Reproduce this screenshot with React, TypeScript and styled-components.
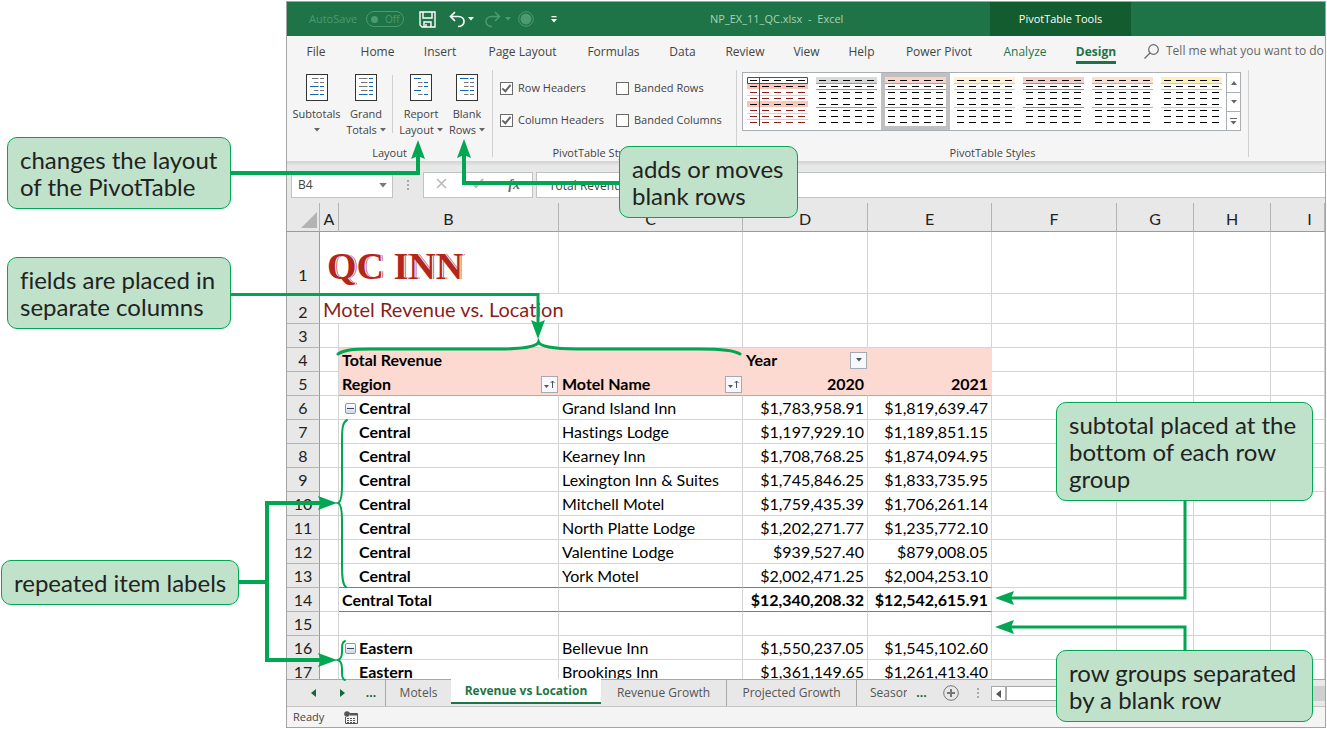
import React from "react";
import styled, { createGlobalStyle } from "styled-components";

const ui = '"Open Sans", "Noto Sans", sans-serif';
const cellFont = 'Lato, "Open Sans", sans-serif';
const green = "#1e7446";
const callGreen = "#00a651";

const Global = createGlobalStyle`
  *, *::before, *::after { box-sizing: border-box; }
  body { margin: 0; background: #fff; font-family: ${ui}; font-variant-ligatures: none; overflow: hidden; }
  button, input { font: inherit; color: inherit; border: 0; padding: 0; margin: 0; background: none; border-radius: 0; }
`;

const Page = styled.div`
  position: relative;
  height: 100vh;
  padding: 1px 1px 1px 286px;
`;

const Workbook = styled.main`
  display: flex;
  flex-direction: column;
  height: 100%;
  border: 1px solid #a2a5a8;
  background: #e8e8e8;
  font-size: 11px;
  line-height: 16px;
  color: #444;
  overflow: hidden;
`;

/* ---------- title bar ---------- */
const TitleBar = styled.header`
  display: flex;
  flex: none;
  height: 34px;
  background: ${green};
  color: #a5d3b9;
`;
const QuickAccess = styled.div`
  display: flex;
  align-items: center;
  width: 423px;
  padding-left: 22px;
  flex: none;
  color: #4c9a70;
`;
const SwitchLabel = styled.label`
  display: flex;
  align-items: center;
  justify-content: space-between;
  width: 95px;
`;
const Toggle = styled.button`
  display: flex;
  align-items: center;
  gap: 7px;
  width: 38px;
  height: 16px;
  padding-left: 4px;
  border: 1px solid #4c9a70;
  border-radius: 8px;
  font-size: 10px;
  line-height: 14px;
  &::before {
    content: "";
    width: 7px;
    height: 7px;
    border-radius: 50%;
    background: #4c9a70;
  }
`;
const IconButton = styled.button<{ $ml: number; $faded?: boolean }>`
  display: flex;
  margin-left: ${(p) => p.$ml}px;
  color: ${(p) => (p.$faded ? "#4c9a70" : "#fff")};
`;
const FileName = styled.div`
  width: 280px;
  flex: none;
  line-height: 34px;
  white-space: pre;
`;
const ToolsTitle = styled.div`
  width: 141px;
  flex: none;
  background: #125c30;
  color: #fff;
  line-height: 34px;
  text-align: center;
  font-weight: 500;
`;

/* ---------- ribbon ---------- */
const TabRow = styled.nav`
  display: flex;
  flex: none;
  height: 30px;
  padding-left: 4px;
  background: #f5f5f5;
  white-space: nowrap;
  overflow: hidden;
`;
const Tab = styled.button<{ $w: number; $tone?: "green" | "active" }>`
  width: ${(p) => p.$w}px;
  flex: none;
  font-size: 12px;
  color: ${(p) => (p.$tone ? green : "#444")};
  font-weight: ${(p) => (p.$tone === "active" ? 700 : 400)};
  span {
    display: inline-block;
    padding: 6px 0 1px;
    border-bottom: 3px solid ${(p) => (p.$tone === "active" ? green : "transparent")};
  }
`;
const TellMe = styled.button`
  display: flex;
  align-items: center;
  gap: 7px;
  margin-left: 7px;
  font-size: 12px;
  color: #666;
`;
const Ribbon = styled.section`
  display: flex;
  flex: none;
  height: 95px;
  padding-top: 4px;
  background: #f5f5f5;
`;
const RibbonShadow = styled.div`
  flex: none;
  height: 5px;
  background: linear-gradient(#d2d2d2, #e8e8e8);
`;
const Group = styled.div<{ $w: number }>`
  display: flex;
  flex-direction: column;
  justify-content: space-between;
  flex: none;
  width: ${(p) => p.$w}px;
  height: 87px;
  border-right: 1px solid #cfcfcf;
`;
const GroupLabel = styled.div`
  text-align: center;
  line-height: 8px;
`;
const BigButtons = styled.div`
  display: flex;
`;
const BigButton = styled.button<{ $w: number }>`
  display: flex;
  flex-direction: column;
  align-items: center;
  width: ${(p) => p.$w}px;
  padding-top: 4px;
  svg.page { margin-bottom: 5px; }
`;
const CaretLine = styled.span`
  display: flex;
  align-items: center;
  gap: 3px;
  height: 16px;
  svg { color: #666; }
`;
const Divider = styled.i`
  width: 1px;
  height: 58px;
  margin: 5px 0 0 6px;
  background: #cfcfcf;
`;
const Options = styled.div`
  display: grid;
  grid-template-columns: 116px 1fr;
  row-gap: 16px;
  padding: 10px 0 0 7px;
`;
const CheckLabel = styled.label`
  display: flex;
  align-items: center;
  gap: 5px;
  white-space: nowrap;
`;
const CheckBox = styled.input`
  appearance: none;
  width: 13px;
  height: 13px;
  border: 1px solid #6a6a6a;
  background: #fff;
  &:checked::after {
    content: "";
    display: block;
    width: 5px;
    height: 9px;
    margin: 0 0 0 3px;
    border: solid #666;
    border-width: 0 2px 2px 0;
    transform: rotate(40deg);
  }
`;
const Gallery = styled.div`
  display: flex;
  width: 499px;
  height: 59px;
  margin: 2px 0 0 5px;
  border: 1px solid #a9aeb2;
  background: #fff;
`;
const StyleItem = styled.button<{ $selected?: boolean }>`
  width: 69px;
  height: 57px;
  border: 4px solid ${(p) => (p.$selected ? "#c0c0c0" : "transparent")};
  display: flex;
`;
const Spinner = styled.div`
  display: grid;
  grid-template-rows: 1fr 1fr 1fr;
  width: 15px;
  margin-left: auto;
  border-left: 1px solid #a9aeb2;
  color: #666;
  button { display: flex; align-items: center; justify-content: center; }
  button + button { border-top: 1px solid #a9aeb2; }
`;

/* ---------- formula bar ---------- */
const FormulaRow = styled.div`
  display: flex;
  flex: none;
  height: 37px;
  padding: 6px 0 5px 4px;
  font-size: 12px;
`;
const NameBox = styled.div`
  display: flex;
  align-items: center;
  width: 102px;
  height: 26px;
  padding: 0 5px 0 6px;
  border: 1px solid #bfc3c6;
  background: #fff;
  input { flex: 1; min-width: 0; }
  button { display: flex; color: #777; }
`;
const Grip = styled.span<{ $w: number }>`
  width: ${(p) => p.$w}px;
  display: flex;
  justify-content: center;
  align-items: center;
  height: 26px;
`;
const FormulaButtons = styled.div`
  display: flex;
  align-items: center;
  justify-content: space-around;
  width: 110px;
  height: 26px;
  margin-right: 3px;
  border: 1px solid #bfc3c6;
  background: #fff;
  color: #b9b9b9;
`;
const Fx = styled.button`
  font: italic 700 14px "Liberation Serif", serif;
  color: #666;
`;
const FormulaInput = styled.input`
  flex: 1;
  height: 26px;
  border: 1px solid #bfc3c6;
  border-right: 0;
  background: #fff;
  padding-left: 12px;
`;

/* ---------- sheet ---------- */
const SheetArea = styled.div`
  flex: 1;
  min-height: 0;
  overflow: hidden;
`;
const Sheet = styled.table`
  width: 100%;
  table-layout: fixed;
  border-collapse: separate;
  border-spacing: 0;
  background: #fff;
  color: #000;
  font-family: ${cellFont};
  font-size: 16px;
  line-height: 20px;
`;
const ColHead = styled.th`
  height: 29px;
  padding: 4px 0 0;
  background: #e8e8e8;
  border-bottom: 1px solid #9b9b9b;
  border-right: 1px solid #b4b4b4;
  font-weight: 400;
  color: #222;
`;
const Corner = styled(ColHead)`
  padding: 0;
  svg { display: block; margin: 6px 0 0 14px; }
`;
/* The last column runs on past the edge of the window, so its letter is centred on its full width. */
const WideLetter = styled.div`
  width: 77px;
  text-align: center;
`;
const Row = styled.tr<{ $h?: number }>`
  height: ${(p) => p.$h ?? 24}px;
`;
const RowHead = styled.th<{ $low?: boolean }>`
  padding: 0 0 ${(p) => (p.$low ? 8 : 1)}px;
  background: #e8e8e8;
  border-right: 1px solid #9b9b9b;
  border-bottom: 1px solid #b4b4b4;
  font-weight: 400;
  color: #222;
  vertical-align: bottom;
`;
const Cell = styled.td<{ $right?: boolean; $bold?: boolean; $pink?: boolean; $line?: string }>`
  padding: 0 3px 1px;
  white-space: nowrap;
  vertical-align: bottom;
  text-align: ${(p) => (p.$right ? "right" : "left")};
  font-weight: ${(p) => (p.$bold ? 700 : 400)};
  background: ${(p) => (p.$pink ? "#fcd9d1" : "#fff")};
  border-right: 1px solid ${(p) => (p.$pink ? "#fcd9d1" : "#d4d4d4")};
  border-bottom: 1px solid ${(p) => p.$line ?? "#d4d4d4"};
`;
const CellFlex = styled.div<{ $indent?: boolean }>`
  display: flex;
  align-items: center;
  justify-content: space-between;
  padding-left: ${(p) => (p.$indent ? 17 : 0)}px;
  margin-right: -3px;
`;
const GroupLine = styled.div`
  display: flex;
  align-items: center;
  gap: 3px;
  padding-left: 3px;
`;
const Collapse = styled.button`
  display: flex;
  align-items: center;
  justify-content: center;
  width: 11px;
  height: 11px;
  border: 1px solid #8a97b0;
  border-radius: 2px;
  background: linear-gradient(#fff, #cfd8e6);
  &::before { content: ""; width: 7px; height: 1px; background: #33476b; }
`;
const FilterButton = styled.button`
  display: flex;
  align-items: center;
  justify-content: center;
  width: 17px;
  height: 17px;
  border: 1px solid #a3aab5;
  background: #f6f8fb;
  color: #555;
`;
const Brand = styled.div`
  padding: 0 0 3px 4px;
  font: 700 38px/46px "Liberation Serif", serif;
  color: #b3261e;
  text-shadow: 1px 0 0 #fff, 2px 0 0 #c9654f;
`;
const Subtitle = styled.div`
  font-size: 20px;
  line-height: 26px;
  color: #8b1f1c;
`;

/* ---------- bottom ---------- */
const SheetTabs = styled.div`
  display: flex;
  flex: none;
  height: 28px;
  padding-left: 12px;
  border-top: 1px solid #a8a8a8;
  border-bottom: 1px solid #c4c4c4;
  background: #e8e8e8;
  font-size: 12px;
`;
const NavButton = styled.button<{ $sep?: boolean }>`
  width: 29px;
  height: 26px;
  color: #0f6b38;
  display: flex;
  align-items: center;
  justify-content: center;
  font-weight: 700;
  border-right: ${(p) => (p.$sep ? "1px solid #a8a8a8" : "0")};
`;
const SheetTab = styled.button<{ $w: number; $sep?: boolean; $active?: boolean }>`
  width: ${(p) => p.$w}px;
  height: ${(p) => (p.$active ? 25 : 26)}px;
  margin-top: ${(p) => (p.$active ? -1 : 0)}px;
  flex: none;
  overflow: hidden;
  white-space: nowrap;
  color: ${(p) => (p.$active ? green : "#555")};
  font-weight: ${(p) => (p.$active ? 700 : 400)};
  background: ${(p) => (p.$active ? "#fff" : "transparent")};
  border-bottom: ${(p) => (p.$active ? `2px solid ${green}` : "0")};
  border-right: ${(p) => (p.$sep ? "1px solid #a8a8a8" : "0")};
`;
const Clip = styled.button`
  width: 50px;
  padding-left: 13px;
  overflow: hidden;
  white-space: nowrap;
  text-align: left;
  color: #555;
`;
const ScrollBar = styled.div`
  display: flex;
  flex: 1;
  height: 15px;
  margin: 6px 0 0;
  background: #cfcfcf;
`;
const ScrollEnd = styled.button`
  display: flex;
  align-items: center;
  justify-content: center;
  width: 15px;
  border: 1px solid #a8a8a8;
  background: #fff;
  color: #555;
`;
const Thumb = styled.div`
  width: 240px;
  border: 1px solid #a8a8a8;
  background: #fff;
`;
const StatusBar = styled.footer`
  display: flex;
  align-items: center;
  gap: 20px;
  flex: none;
  height: 20px;
  padding-left: 6px;
  background: #f4f4f4;
`;

/* ---------- annotations ---------- */
const Lines = styled.svg`
  position: absolute;
  left: 0;
  top: 0;
  pointer-events: none;
`;
const Callout = styled.aside<{ $x: number; $y: number; $w: number }>`
  position: absolute;
  left: ${(p) => p.$x}px;
  top: ${(p) => p.$y}px;
  width: ${(p) => p.$w}px;
  padding: 8px 0 8px 12px;
  border: 1px solid ${callGreen};
  border-radius: 10px;
  background: #c0e2ca;
  color: #222;
  font-family: Lato, sans-serif;
  font-size: 24px;
  line-height: 27px;
  white-space: nowrap;
`;

const Caret = ({ w = 6 }: { w?: number }) => (
  <svg width={w} height={w === 6 ? 4 : 5} viewBox="0 0 6 4"><path d="M0 0H6L3 3.5Z" fill="currentColor" /></svg>
);

const Doc = ({ rows }: { rows: string }) => (
  <svg className="page" width="22" height="27" viewBox="0 0 22 27">
    <rect x="0.5" y="0.5" width="21" height="26" fill="#fff" stroke="#333" />
    {rows.split(",").map((row, i) => {
      const [kind, a, b] = row.split("");
      const c = (v: string) => (v === "b" ? "#1565b0" : "#777");
      const x = kind === "l" ? 4 : kind === "m" ? 6 : 8;
      const y = 4.5 + i * 4;
      return (
        <g key={y}>
          {a !== "-" && <path d={`M${x} ${y}H${b === "-" ? 11 : 12.500}`} stroke={c(a)} />}
          {b !== "-" && <path d={`M14 ${y}H18`} stroke={c(b)} />}
        </g>
      );
    })}
  </svg>
);

const Swatch = ({ fill, line, first }: { fill: string; line: string; first?: boolean }) => (
  <svg width="61" height="49" viewBox="0 0 61 49">
    <rect width="61" height={6} fill={first ? "#fff" : fill} />
    {first && <path d="M0 6H61V12H0ZM0 24H61V30H0Z" fill="#fbc6b8" />}
    {first ? (
      <path d="M0 18.5H61M0 36.5H61M0 42.5H61" stroke="#fbc6b8" />
    ) : (
      <path d="M0 6.5H61M0 12.5H61M0 30.5H61" stroke={line} />
    )}
    {Array.from({ length: 8 }, (_, r) => (
      <path
        key={r}
        d={`M3 ${3.5 + r * 6}h7m5 0h7m5 0h7m5 0h7m5 0h7`}
        stroke={first && ![0, 1, 4].includes(r) ? "#8b1f1c" : "#000"}
      />
    ))}
    {first && <path d="M0.5 0.5H60.5V6.5H0.5ZM12.5 0V49" fill="none" stroke="#b3261e" />}
  </svg>
);

const SortIcon = () => (
  <svg width="11" height="9" viewBox="0 0 11 9">
    <path d="M0 5H5L2.500 8Z" fill="currentColor" />
    <path d="M8.500 8V1M6.500 3L8.500 1L10.500 3" stroke="currentColor" fill="none" />
  </svg>
);

const GripDots = () => (
  <svg width="2" height="10" viewBox="0 0 2 10"><path d="M0 0H2V2H0ZM0 4H2V6H0ZM0 8H2V10H0Z" fill="#aaa" /></svg>
);

const styles = [
  ["#fff", "#b3261e"], ["#d9d9d9", "#999"], ["#fcd3c9", "#f08468"], ["#fff0cf", "#ffcb5c"],
  ["#f8cfc6", "#e8755b"], ["#fde0cc", "#f7a56a"], ["#fff0b8", "#f8cf30"],
];

const tabs: [string, number][] = [
  ["File", 50], ["Home", 73], ["Insert", 52], ["Page Layout", 113], ["Formulas", 69], ["Data", 69],
  ["Review", 56], ["View", 67], ["Help", 43], ["Power Pivot", 112], ["Analyze", 60],
];

const data: [string, string, string, string][] = [
  ["Central", "Grand Island Inn", "$1,783,958.91", "$1,819,639.47"],
  ["Central", "Hastings Lodge", "$1,197,929.10", "$1,189,851.15"],
  ["Central", "Kearney Inn", "$1,708,768.25", "$1,874,094.95"],
  ["Central", "Lexington Inn & Suites", "$1,745,846.25", "$1,833,735.95"],
  ["Central", "Mitchell Motel", "$1,759,435.39", "$1,706,261.14"],
  ["Central", "North Platte Lodge", "$1,202,271.77", "$1,235,772.10"],
  ["Central", "Valentine Lodge", "$939,527.40", "$879,008.05"],
  ["Central", "York Motel", "$2,002,471.25", "$2,004,253.10"],
];
const eastern: [string, string, string, string][] = [
  ["Eastern", "Bellevue Inn", "$1,550,237.05", "$1,545,102.60"],
  ["Eastern", "Brookings Inn", "$1,361,149.65", "$1,261,413.40"],
];

const Blank = ({ n }: { n: number }) => <>{Array.from({ length: n }, (_, i) => <Cell key={i} />)}</>;

const orange = "#f0502a";
const pink = "#fcd9d1";
const salmon = "#f0937c";

const DataRow = ({ n, row, first, last }: { n: number; row: string[]; first?: boolean; last?: boolean }) => {
  const line = last ? orange : undefined;
  return (
    <Row>
      <RowHead scope="row">{n}</RowHead>
      <Cell />
      <Cell $bold $line={line}>
        {first ? (
          <GroupLine><Collapse aria-label={`Collapse ${row[0]}`} /><span>{row[0]}</span></GroupLine>
        ) : (
          <CellFlex $indent>{row[0]}</CellFlex>
        )}
      </Cell>
      <Cell $line={line}>{row[1]}</Cell>
      <Cell $right $line={line}>{row[2]}</Cell>
      <Cell $right $line={line}>{row[3]}</Cell>
      <Blank n={4} />
    </Row>
  );
};

export default function App() {
  return (
    <Page>
      <Global />
      <Workbook>
        <TitleBar>
          <QuickAccess>
            <SwitchLabel>AutoSave <Toggle>Off</Toggle></SwitchLabel>
            <IconButton $ml={15} aria-label="Save">
              <svg width="17" height="17" viewBox="0 0 17 17" fill="none" stroke="currentColor" strokeWidth="1.400">
                <path d="M1 1H16V16H3L1 14ZM4 1V7H13V1M5 16V11H12V16M7 13V16" />
              </svg>
            </IconButton>
            <IconButton $ml={13} aria-label="Undo">
              <svg width="17" height="17" viewBox="0 0 17 17" fill="none" stroke="currentColor" strokeWidth="1.700">
                <path d="M6 1L1.500 5.500L6 10M2 5.500H9.500C13 5.500 15 8 15 10.500C15 13.500 12.500 15.500 9 15.500" />
              </svg>
            </IconButton>
            <IconButton $ml={2} aria-label="Undo list"><Caret /></IconButton>
            <IconButton $ml={10} $faded aria-label="Redo">
              <svg width="17" height="17" viewBox="0 0 17 17" fill="none" stroke="currentColor" strokeWidth="1.500">
                <path d="M11 1L15.500 5.500L11 10M15 5.500H7.500C4 5.500 2 8 2 10.500C2 13.500 4.500 15.500 8 15.500" />
              </svg>
            </IconButton>
            <IconButton $ml={4} $faded aria-label="Redo list"><Caret /></IconButton>
            <IconButton $ml={7} $faded aria-label="Record">
              <svg width="16" height="16" viewBox="0 0 16 16">
                <circle cx="8" cy="8" r="7.300" fill="none" stroke="currentColor" />
                <circle cx="8" cy="8" r="5.500" fill="currentColor" />
              </svg>
            </IconButton>
            <IconButton $ml={17} aria-label="Customize toolbar">
              <svg width="6" height="7" viewBox="0 0 6 7"><path d="M0.500 0H5.500V1.200H0.500ZM0 3H6L3 6.500Z" fill="currentColor" /></svg>
            </IconButton>
          </QuickAccess>
          <FileName>{"NP_EX_11_QC.xlsx  -  Excel"}</FileName>
          <ToolsTitle>PivotTable Tools</ToolsTitle>
        </TitleBar>

        <TabRow>
          {tabs.map(([t, w]) => (
            <Tab key={t} $w={w} $tone={t === "Analyze" ? "green" : undefined}><span>{t}</span></Tab>
          ))}
          <Tab $w={82} $tone="active"><span>Design</span></Tab>
          <TellMe>
            <svg width="15" height="15" viewBox="0 0 15 15" fill="none" stroke="currentColor" strokeWidth="1.200">
              <circle cx="9.500" cy="5.500" r="4.800" /><path d="M6 9L0.500 14.500" />
            </svg>
            Tell me what you want to do
          </TellMe>
        </TabRow>

        <Ribbon>
          <Group $w={206}>
            <BigButtons>
              <BigButton $w={59}>
                <Doc rows="mgg,rgg,lbb,rgg,lbb" />Subtotals<CaretLine><Caret /></CaretLine>
              </BigButton>
              <BigButton $w={40}>
                <Doc rows="lgb,mgb,lgb,mgb,lbb" />Grand<CaretLine>Totals <Caret /></CaretLine>
              </BigButton>
              <Divider />
              <BigButton $w={56}>
                <Doc rows="lb-,rgb,rgb,lb-,rgb" />Report<CaretLine>Layout <Caret /></CaretLine>
              </BigButton>
              <BigButton $w={36}>
                <Doc rows="lbb,rgg,rgg,lbb,rgg" />Blank<CaretLine>Rows <Caret /></CaretLine>
              </BigButton>
            </BigButtons>
            <GroupLabel>Layout</GroupLabel>
          </Group>
          <Group $w={244}>
            <Options>
              <CheckLabel><CheckBox type="checkbox" defaultChecked />Row Headers</CheckLabel>
              <CheckLabel><CheckBox type="checkbox" />Banded Rows</CheckLabel>
              <CheckLabel><CheckBox type="checkbox" defaultChecked />Column Headers</CheckLabel>
              <CheckLabel><CheckBox type="checkbox" />Banded Columns</CheckLabel>
            </Options>
            <GroupLabel>PivotTable Style Options</GroupLabel>
          </Group>
          <Group $w={512}>
            <Gallery>
              {styles.map(([fill, line], i) => (
                <StyleItem key={line} $selected={i === 2} aria-label={`Style ${i + 1}`}>
                  <Swatch fill={fill} line={line} first={i === 0} />
                </StyleItem>
              ))}
              <Spinner>
                <button aria-label="Up"><svg width="6" height="4" viewBox="0 0 6 4"><path d="M0 4H6L3 0Z" fill="currentColor" /></svg></button>
                <button aria-label="Down"><Caret /></button>
                <button aria-label="More"><svg width="7" height="7" viewBox="0 0 7 7"><path d="M0 0H7V1H0ZM0.500 3H6.500L3.500 6.500Z" fill="currentColor" /></svg></button>
              </Spinner>
            </Gallery>
            <GroupLabel>PivotTable Styles</GroupLabel>
          </Group>
        </Ribbon>
        <RibbonShadow />

        <FormulaRow>
          <NameBox>
            <input aria-label="Name box" defaultValue="B4" />
            <button aria-label="Names"><Caret w={8} /></button>
          </NameBox>
          <Grip $w={30}><GripDots /></Grip>
          <FormulaButtons>
            <button aria-label="Cancel"><svg width="11" height="11" viewBox="0 0 11 11"><path d="M1 1L10 10M10 1L1 10" stroke="currentColor" strokeWidth="1.600" /></svg></button>
            <button aria-label="Enter"><svg width="13" height="11" viewBox="0 0 13 11"><path d="M1 5L5 9L12 1" fill="none" stroke="currentColor" strokeWidth="2" /></svg></button>
            <Fx>fx</Fx>
          </FormulaButtons>
          <FormulaInput aria-label="Formula" defaultValue="Total Revenue" />
        </FormulaRow>

        <SheetArea>
          <Sheet>
            <colgroup>
              <col style={{ width: 33 }} /><col style={{ width: 19 }} /><col style={{ width: 220 }} />
              <col style={{ width: 184 }} /><col style={{ width: 125 }} /><col style={{ width: 124 }} />
              <col style={{ width: 125 }} /><col style={{ width: 77 }} /><col style={{ width: 77 }} /><col />
            </colgroup>
            <thead>
              <tr>
                <Corner aria-label="Select all">
                  <svg width="16" height="16" viewBox="0 0 16 16"><path d="M16 0V16H0Z" fill="#b3b3b3" /></svg>
                </Corner>
                {"ABCDEFGH".split("").map((c) => <ColHead key={c} scope="col">{c}</ColHead>)}
                <ColHead scope="col"><WideLetter>I</WideLetter></ColHead>
              </tr>
            </thead>
            <tbody>
              <Row $h={62}>
                <RowHead scope="row" $low>1</RowHead>
                <Cell colSpan={2}><Brand>QC INN</Brand></Cell>
                <Blank n={7} />
              </Row>
              <Row $h={30}>
                <RowHead scope="row">2</RowHead>
                <Cell colSpan={3}><Subtitle>Motel Revenue vs. Location</Subtitle></Cell>
                <Blank n={6} />
              </Row>
              <Row><RowHead scope="row">3</RowHead><Blank n={9} /></Row>
              <Row>
                <RowHead scope="row">4</RowHead><Cell />
                <Cell $bold $pink $line={pink}>Total Revenue</Cell>
                <Cell $pink $line={pink} />
                <Cell $bold $pink $line={pink}>
                  <CellFlex>Year <FilterButton aria-label="Filter year"><Caret /></FilterButton></CellFlex>
                </Cell>
                <Cell $pink $line={pink} />
                <Blank n={4} />
              </Row>
              <Row>
                <RowHead scope="row">5</RowHead><Cell />
                <Cell $bold $pink $line={salmon}>
                  <CellFlex>Region <FilterButton aria-label="Sort region"><SortIcon /></FilterButton></CellFlex>
                </Cell>
                <Cell $bold $pink $line={salmon}>
                  <CellFlex>Motel Name <FilterButton aria-label="Sort motel"><SortIcon /></FilterButton></CellFlex>
                </Cell>
                <Cell $bold $right $pink $line={salmon}>2020</Cell>
                <Cell $bold $right $pink $line={salmon}>2021</Cell>
                <Blank n={4} />
              </Row>
              {data.map((r, i) => <DataRow key={r[1]} n={i + 6} row={r} first={i === 0} last={i === 7} />)}
              <Row>
                <RowHead scope="row">14</RowHead><Cell />
                <Cell $bold $line={orange}>Central Total</Cell>
                <Cell $line={orange} />
                <Cell $bold $right $line={orange}>$12,340,208.32</Cell>
                <Cell $bold $right $line={orange}>$12,542,615.91</Cell>
                <Blank n={4} />
              </Row>
              <Row><RowHead scope="row">15</RowHead><Blank n={9} /></Row>
              {eastern.map((r, i) => <DataRow key={r[1]} n={i + 16} row={r} first={i === 0} />)}
            </tbody>
          </Sheet>
        </SheetArea>

        <SheetTabs>
          <NavButton aria-label="Previous sheet"><svg width="5" height="8" viewBox="0 0 5 8"><path d="M5 0V8L0 4Z" fill="currentColor" /></svg></NavButton>
          <NavButton aria-label="Next sheet"><svg width="5" height="8" viewBox="0 0 5 8"><path d="M0 0V8L5 4Z" fill="currentColor" /></svg></NavButton>
          <NavButton $sep>...</NavButton>
          <SheetTab $w={65}>Motels</SheetTab>
          <SheetTab $w={150} $active>Revenue vs Location</SheetTab>
          <SheetTab $w={126} $sep>Revenue Growth</SheetTab>
          <SheetTab $w={130} $sep>Projected Growth</SheetTab>
          <Clip>Seasonal</Clip>
          <NavButton>...</NavButton>
          <NavButton aria-label="New sheet">
            <svg width="16" height="16" viewBox="0 0 16 16" fill="none" stroke="#777">
              <circle cx="8" cy="8" r="7.300" /><path d="M8 4V12M4 8H12" strokeWidth="2" />
            </svg>
          </NavButton>
          <Grip $w={26}><GripDots /></Grip>
          <ScrollBar>
            <ScrollEnd aria-label="Scroll left"><svg width="5" height="8" viewBox="0 0 5 8"><path d="M5 0V8L0 4Z" fill="currentColor" /></svg></ScrollEnd>
            <Thumb />
          </ScrollBar>
        </SheetTabs>
        <StatusBar>
          Ready
          <svg width="14" height="13" viewBox="0 0 14 13">
            <path d="M5 2.500H13.500V12.500H1.500V6" fill="none" stroke="#555" />
            <path d="M6 2H13V4.500H6Z" fill="#555" />
            <circle cx="3" cy="3" r="2.800" fill="#555" />
            <path d="M3 7.500H12M3 9.500H12M3 11.500H12" stroke="#555" strokeDasharray="2 1" />
          </svg>
        </StatusBar>
      </Workbook>

      <Lines width="1327" height="729" viewBox="0 0 1327 729">
        <g fill="none" stroke={callGreen} strokeWidth="4">
          <path d="M230 173H418V152" />
          <path d="M620 183H464V151" />
          <path d="M230 294.500H538V325" strokeWidth="3" />
          <path d="M238 582H268M322 503H267V660H322" />
          <path d="M1185 499V598H1010" strokeWidth="3" />
          <path d="M1185 651V627H1010" strokeWidth="3" />
        </g>
        <g fill={callGreen}>
          <path d="M418 140L425 159L418 156L411 159Z" />
          <path d="M464 139L471 158L464 155L457 158Z" />
          <path d="M538 339L531 320L538 323L545 320Z" />
          <path d="M337 503L318 510L321 503L318 496Z" />
          <path d="M337 660L318 667L321 660L318 653Z" />
          <path d="M995 598L1014 591L1011 598L1014 605Z" />
          <path d="M995 627L1014 620L1011 627L1014 634Z" />
        </g>
        <g fill="none" stroke={callGreen} strokeLinecap="round">
          <path d="M338 354C344 350 352 349 370 349H500C525 349 537 346 538.500 342C540 346 552 349 577 349H700C722 349 734 350 740 354" strokeWidth="3" />
          <path d="M347 420C343 422 342 427 342 440V485C342 497 341 502 338 503C341 504 342 509 342 521V565C342 580 343 585 346 587" strokeWidth="2" />
          <path d="M345 641C342 642 342 645 342 652C342 657 341 659 338 660C341 661 342 664 342 669C342 676 342 679 345 680" strokeWidth="2" />
        </g>
      </Lines>

      <Callout $x={7} $y={137} $w={224}>changes the layout<br />of the PivotTable</Callout>
      <Callout $x={7} $y={257} $w={224}>fields are placed in<br />separate columns</Callout>
      <Callout $x={619} $y={146} $w={179}>adds or moves<br />blank rows</Callout>
      <Callout $x={1056} $y={402} $w={257}>subtotal placed at the<br />bottom of each row<br />group</Callout>
      <Callout $x={1} $y={560} $w={238}>repeated item labels</Callout>
      <Callout $x={1056} $y={650} $w={257}>row groups separated<br />by a blank row</Callout>
    </Page>
  );
}
